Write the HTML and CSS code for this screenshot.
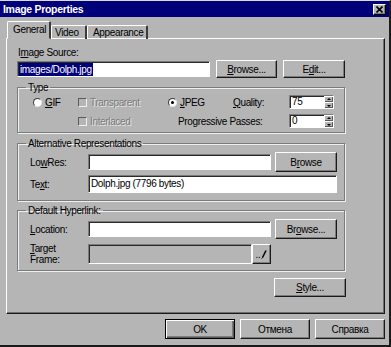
FILE: index.html
```html
<!DOCTYPE html>
<html lang="en">
<head>
    <meta charset="UTF-8">
    <meta name="viewport" content="width=device-width, initial-scale=1.0">
    <title>Image Properties</title>
    <link rel="stylesheet" href="styles.css">
</head>
<body>
    <div class="dialog">
        <div class="titlebar">
            <span class="title">Image Properties</span>
            <span class="close">
                <svg width="7" height="7" viewBox="0 0 7 7"><path d="M0.5 0.5L6.5 6.5M6.5 0.5L0.5 6.5" stroke="#000" stroke-width="1.6"/></svg>
            </span>
        </div>

        <div class="tabs">
            <div class="tab active">General</div>
            <div class="tab tab-video">Video</div>
            <div class="tab tab-appearance">Appearance</div>
        </div>

        <div class="panel">
            <div class="field-label">I<u>m</u>age Source:</div>
            <div class="src-row">
                <div class="input src-input"><span class="selected">images/Dolph.jpg</span></div>
                <button class="btn btn-browse"><u>B</u>rowse...</button>
                <button class="btn btn-edit">E<u>d</u>it...</button>
            </div>

            <fieldset class="group group-type">
                <legend>Type</legend>
                <div class="type-grid">
                    <div class="option"><span class="radio"></span><span><u>G</u>IF</span></div>
                    <div class="option disabled"><span class="check"></span><span>Transparent</span></div>
                    <div class="option"><span class="radio checked"></span><span><u>J</u>PEG</span></div>
                    <div class="option"><span><u>Q</u>uality:</span></div>
                    <div class="spinner"><span class="spin-value">75</span><span class="spin-btns"><span class="spin-up"></span><span class="spin-down"></span></span></div>

                    <div></div>
                    <div class="option disabled"><span class="check"></span><span>Interlaced</span></div>
                    <div class="option passes"><span>Progressive Passes:</span></div>
                    <div class="spinner"><span class="spin-value">0</span><span class="spin-btns"><span class="spin-up"></span><span class="spin-down"></span></span></div>
                </div>
            </fieldset>

            <fieldset class="group group-alt">
                <legend>Alternative Representations</legend>
                <div class="form-row">
                    <span class="row-label">Lo<u>w</u>Res:</span>
                    <div class="input short-input"></div>
                    <button class="btn btn-side">B<u>r</u>owse</button>
                </div>
                <div class="form-row row-text">
                    <span class="row-label">Te<u>x</u>t:</span>
                    <div class="input long-input">Dolph.jpg (7796 bytes)</div>
                </div>
            </fieldset>

            <fieldset class="group group-link">
                <legend>Default Hyperlink:</legend>
                <div class="form-row">
                    <span class="row-label"><u>L</u>ocation:</span>
                    <div class="input short-input"></div>
                    <button class="btn btn-side">Br<u>o</u>wse...</button>
                </div>
                <div class="form-row row-target">
                    <span class="row-label two-line"><u>T</u>arget<br>Frame:</span>
                    <div class="input target-input"></div>
                    <button class="btn btn-pick">..<svg width="6" height="9" viewBox="0 0 6 9"><path d="M5 0.5L1.5 7.5" stroke="#000" stroke-width="1.6"/><path d="M1.5 7.5L0.8 8.6" stroke="#000" stroke-width="1"/></svg></button>
                </div>
            </fieldset>

            <div class="style-row">
                <button class="btn btn-style"><u>S</u>tyle...</button>
            </div>
        </div>

        <div class="footer">
            <button class="btn btn-footer btn-default">OK</button>
            <button class="btn btn-footer">Отмена</button>
            <button class="btn btn-footer">Справка</button>
        </div>
    </div>
</body>
</html>
```

FILE: styles.css
```css
body {
    margin: 0;
    background-color: #b5b5b5;
    font-family: "Liberation Sans", Arial, sans-serif;
    font-size: 10px;
    letter-spacing: -0.35px;
    color: #000;
}
.dialog {
    width: 391px;
    height: 347px;
    box-sizing: border-box;
    background-color: #b5b5b5;
    border-top: 1px solid #dcdcdc;
    border-right: 2px solid #1a1a1a;
    border-bottom: 2px solid #1a1a1a;
}
u {
    text-decoration: underline;
    text-underline-offset: 1px;
}

/* title bar */
.titlebar {
    height: 16px;
    background-color: #00007b;
    display: flex;
    align-items: center;
    justify-content: space-between;
    padding: 0 3px 0 3px;
}
.title {
    color: #fff;
    font-weight: bold;
    font-size: 10.5px;
    letter-spacing: -0.3px;
}
.close {
    width: 11px;
    height: 9px;
    background-color: #b5b5b5;
    border: 1px solid;
    border-color: #fff #000 #000 #fff;
    box-shadow: inset -1px -1px 0 #7b7b7b;
    display: flex;
    align-items: center;
    justify-content: center;
}

/* tabs */
.tabs {
    display: flex;
    align-items: flex-end;
    height: 16px;
    margin-top: 5px;
    padding-left: 7px;
    position: relative;
    z-index: 1;
}
.tab {
    height: 14px;
    line-height: 14px;
    box-sizing: border-box;
    border-top: 1px solid #fff;
    border-left: 1px solid #fff;
    border-right: 2px solid #3a3a3a;
    border-radius: 2px 2px 0 0;
    padding: 0 4px;
    margin-bottom: -1px;
}
.tab.active {
    height: 18px;
    line-height: 16px;
    width: 44px;
    padding-left: 5px;
    border-bottom: 1px solid #b5b5b5;
    background-color: #b5b5b5;
}
.tab-video {
    width: 36px;
    padding-left: 3px;
}
.tab-appearance {
    width: 61px;
    padding-left: 5px;
}

/* panel */
.panel {
    width: 379px;
    height: 276px;
    box-sizing: border-box;
    margin-left: 6px;
    border-top: 1px solid #fff;
    border-left: 1px solid #fff;
    border-right: 1px solid #1a1a1a;
    border-bottom: 1px solid #1a1a1a;
    box-shadow: inset -1px -1px 0 #6e6e6e;
    padding: 7px 0 0 10px;
}
.field-label {
    height: 13px;
    line-height: 13px;
    padding-left: 1px;
}
.src-row {
    display: flex;
    align-items: center;
    height: 18px;
    margin-top: 1px;
}

/* inputs */
.input {
    box-sizing: border-box;
    background-color: #fff;
    border-top: 1px solid #7b7b7b;
    border-left: 1px solid #7b7b7b;
    border-right: 1px solid #fff;
    border-bottom: 1px solid #fff;
    box-shadow: inset 1px 1px 0 #2a2a2a;
    padding: 0 2px;
    line-height: 14px;
    white-space: nowrap;
}
.src-input {
    width: 193px;
    height: 16px;
    padding-left: 1px;
}
.selected {
    background-color: #00007b;
    color: #fff;
    padding: 0 1px;
    display: inline-block;
    line-height: 13px;
    margin-top: 1px;
}

/* buttons */
.btn {
    font-family: inherit;
    font-size: 10px;
    letter-spacing: -0.35px;
    color: #000;
    background-color: #b5b5b5;
    box-sizing: border-box;
    border-top: 1px solid #fff;
    border-left: 1px solid #fff;
    border-right: 1px solid #1a1a1a;
    border-bottom: 1px solid #1a1a1a;
    box-shadow: inset -1px -1px 0 #7b7b7b;
    padding: 0;
    margin: 0;
    display: flex;
    align-items: center;
    justify-content: center;
}
.btn-browse {
    width: 61px;
    height: 18px;
    margin-left: 6px;
}
.btn-edit {
    width: 62px;
    height: 18px;
    margin-left: 6px;
}

/* group boxes */
.group {
    width: 328px;
    box-sizing: border-box;
    margin: 0;
    padding: 0;
    border: 1px solid #7b7b7b;
    box-shadow: inset 1px 1px 0 #f0f0f0, 1px 1px 0 #f0f0f0;
}
.group legend {
    margin-left: 8px;
    padding: 0 2px;
    line-height: 13px;
}
.group-type {
    margin-top: 3px;
    padding-bottom: 3px;
}
.group-alt {
    margin-top: 4px;
    padding-bottom: 7px;
}
.group-link {
    margin-top: 3px;
    padding-bottom: 6px;
}

/* type grid */
.type-grid {
    display: grid;
    grid-template-columns: 45px 90px 65px 56px 45px;
    grid-auto-rows: 16px;
    row-gap: 3px;
    padding-left: 15px;
}
.option {
    display: flex;
    align-items: center;
    gap: 3px;
    white-space: nowrap;
}
.option.disabled {
    color: #7b7b7b;
    text-shadow: 1px 1px 0 #e8e8e8;
}
.passes {
    grid-column: span 2;
    padding-left: 10px;
}
.radio {
    width: 9px;
    height: 9px;
    box-sizing: border-box;
    border-radius: 50%;
    background-color: #fff;
    border: 1px solid;
    border-color: #3a3a3a #e8e8e8 #e8e8e8 #3a3a3a;
    position: relative;
}
.radio.checked::after {
    content: "";
    position: absolute;
    left: 2px;
    top: 2px;
    width: 3px;
    height: 3px;
    border-radius: 50%;
    background-color: #000;
}
.check {
    width: 9px;
    height: 9px;
    box-sizing: border-box;
    border: 1px solid;
    border-color: #5a5a5a #f0f0f0 #f0f0f0 #5a5a5a;
    background-color: #b5b5b5;
}
.spinner {
    width: 45px;
    height: 14px;
    margin-top: 1px;
    box-sizing: border-box;
    background-color: #fff;
    border-top: 1px solid #7b7b7b;
    border-left: 1px solid #7b7b7b;
    border-right: 1px solid #fff;
    border-bottom: 1px solid #fff;
    box-shadow: inset 1px 1px 0 #2a2a2a;
    display: flex;
    justify-content: space-between;
}
.spin-value {
    padding-left: 2px;
    line-height: 12px;
}
.spin-btns {
    width: 9px;
    display: flex;
    flex-direction: column;
}
.spin-up, .spin-down {
    flex: 1;
    background-color: #b5b5b5;
    border-top: 1px solid #fff;
    border-left: 1px solid #fff;
    box-shadow: inset -1px -1px 0 #5a5a5a;
    position: relative;
}
.spin-up::after, .spin-down::after {
    content: "";
    position: absolute;
    left: 2px;
    width: 0;
    height: 0;
    border-left: 2px solid transparent;
    border-right: 2px solid transparent;
}
.spin-up::after {
    top: 1px;
    border-bottom: 2px solid #000;
}
.spin-down::after {
    top: 2px;
    border-top: 2px solid #000;
}

/* form rows */
.form-row {
    display: flex;
    align-items: center;
    height: 20px;
    margin-top: 2px;
}
.row-text {
    height: 18px;
    margin-top: 3px;
}
.row-target {
    margin-top: 5px;
}
.row-label {
    width: 58px;
    margin-left: 12px;
    white-space: nowrap;
}
.two-line {
    line-height: 11px;
}
.short-input {
    width: 183px;
    height: 16px;
}
.long-input {
    width: 249px;
    height: 18px;
    line-height: 16px;
}
.target-input {
    width: 164px;
    height: 20px;
    background-color: #b5b5b5;
}
.btn-side {
    width: 62px;
    height: 20px;
    margin-left: 4px;
}
.btn-pick {
    width: 19px;
    height: 20px;
    gap: 0;
    align-items: flex-end;
    padding-bottom: 4px;
    line-height: 9px;
}
.btn-pick svg {
    margin-left: 1px;
}

.style-row {
    display: flex;
    margin-top: 7px;
    padding-left: 257px;
}
.btn-style {
    width: 72px;
    height: 19px;
}

/* footer */
.footer {
    display: flex;
    justify-content: flex-end;
    gap: 5px;
    margin-top: 5px;
    padding-right: 4px;
}
.btn-footer {
    width: 70px;
    height: 20px;
}
.btn-default {
    border: 1px solid #000;
    box-shadow: inset 1px 1px 0 #fff, inset -1px -1px 0 #5a5a5a, inset -2px -2px 0 #7b7b7b;
}
```
